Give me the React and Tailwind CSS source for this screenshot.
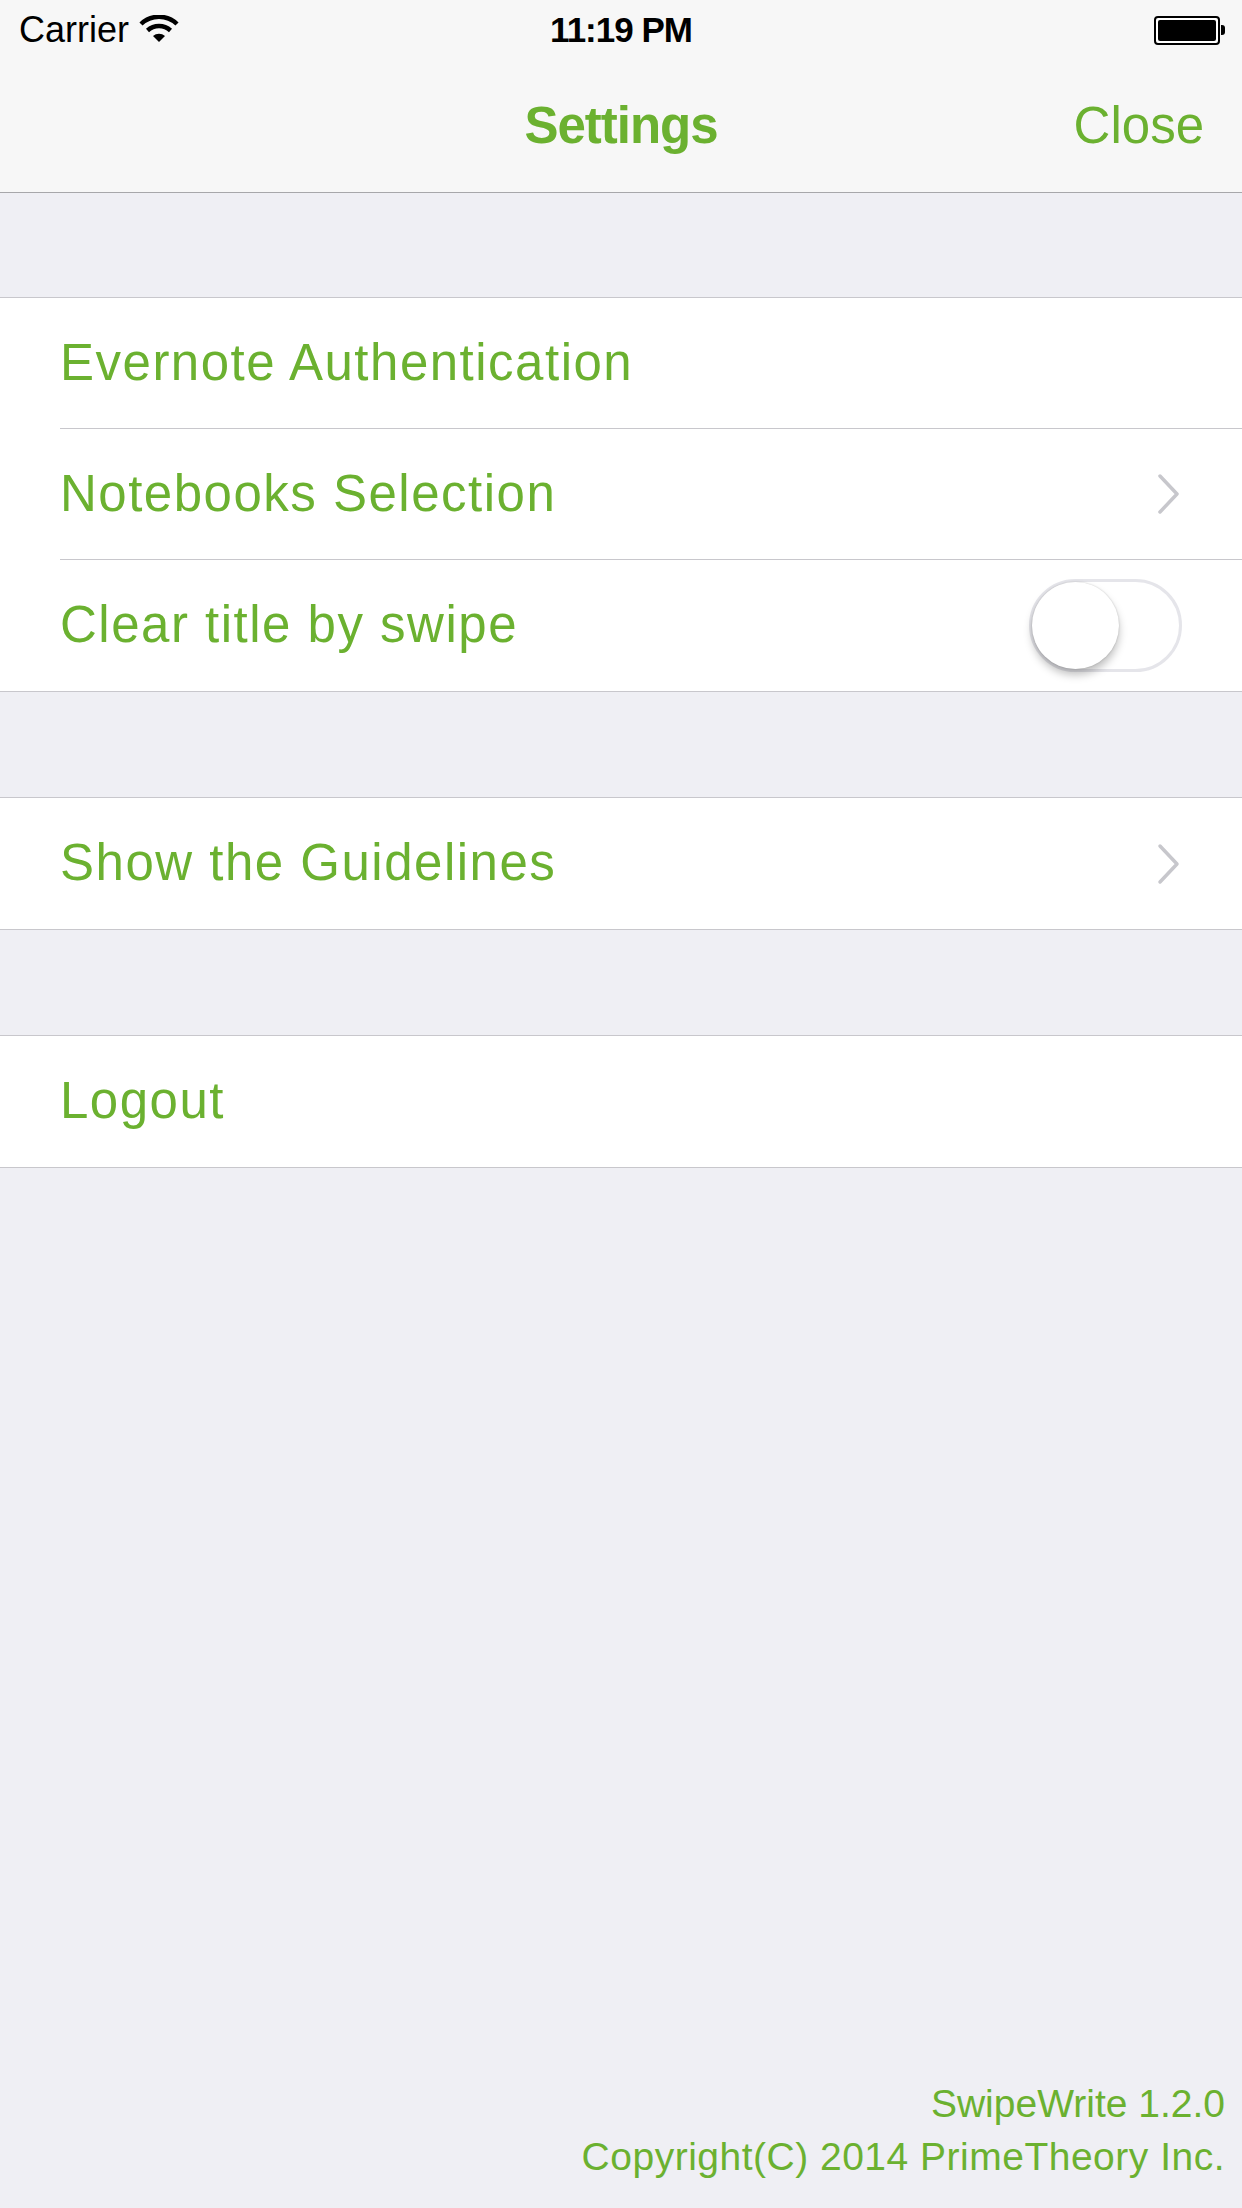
import React, { useState } from 'react';

const GREEN = 'text-[#6bb130]';

const Chevron = () => (
  <svg width="26" height="42" viewBox="0 0 26 42" className="shrink-0">
    <path d="M4 3 L21 21 L4 39" fill="none" stroke="#c7c7cc" strokeWidth="3.5" strokeLinecap="round" strokeLinejoin="round" />
  </svg>
);

const Toggle = ({ on, onChange }) => (
  <button
    onClick={() => onChange(!on)}
    className={`relative w-[153px] h-[93px] rounded-full border-[3px] shrink-0 transition-colors ${on ? 'bg-[#6bb130] border-[#6bb130]' : 'bg-white border-[#e5e5ea]'}`}
  >
    <span
      className={`absolute top-[0px] w-[87px] h-[87px] rounded-full bg-white shadow-[0_6px_9px_rgba(0,0,0,0.25),0_0_2px_rgba(0,0,0,0.2)] ${on ? 'left-[60px]' : 'left-[0px]'}`}
    />
  </button>
);

const Row = ({ label, children, last }) => (
  <div className="pl-[60px] bg-white">
    <div className={`h-[131px] flex items-center justify-between pr-[60px] ${last ? '' : 'border-b border-[#c8c7cc]'}`}>
      <span className={`text-[51px] tracking-[1.5px] ${GREEN}`}>{label}</span>
      {children}
    </div>
  </div>
);

const Group = ({ children }) => (
  <div className="bg-white border-y border-[#c8c7cc]">{children}</div>
);

const Wifi = () => (
  <svg width="40" height="28" viewBox="0 0 40 28">
    <path d="M2 9 A26 26 0 0 1 38 9" fill="none" stroke="#000" strokeWidth="4.5" />
    <path d="M8.5 15.5 A17 17 0 0 1 31.5 15.5" fill="none" stroke="#000" strokeWidth="4.5" />
    <path d="M14 21 L20 27 L26 21 A9 9 0 0 0 14 21 Z" fill="#000" />
  </svg>
);

const Battery = () => (
  <div className="flex items-center">
    <div className="w-[66px] h-[29px] rounded-[4px] border-2 border-black p-[2px] bg-white">
      <div className="w-full h-full bg-black rounded-[2px]" />
    </div>
    <div className="w-[4px] h-[10px] bg-black rounded-r-[3px] ml-[1px]" />
  </div>
);

export default function App() {
  const [clearBySwipe, setClearBySwipe] = useState(false);

  return (
    <div className="w-[1242px] h-[2208px] flex flex-col bg-[#efeff4]" style={{ fontFamily: '"Liberation Sans", Arial, sans-serif' }}>
      {/* Status + nav bar */}
      <div className="bg-[#f7f7f7] border-b border-[#a7a7aa] h-[193px] flex flex-col">
        <div className="h-[60px] relative flex items-center px-[19px]">
          <span className="text-[36px] text-black">Carrier</span>
          <span className="ml-[10px] mt-[-2px]"><Wifi /></span>
          <span className="absolute left-0 right-0 text-center text-[35px] font-bold tracking-[-1px] text-black">11:19 PM</span>
          <span className="ml-auto mr-[-2px]"><Battery /></span>
        </div>
        <div className="flex-1 relative flex items-center justify-end pr-[38px]">
          <span className={`absolute left-0 right-0 text-center text-[51px] font-bold tracking-[-1px] ${GREEN}`}>Settings</span>
          <button className={`relative text-[51px] ${GREEN}`}>Close</button>
        </div>
      </div>

      <div className="mt-[104px]">
        <Group>
          <Row label="Evernote Authentication" />
          <Row label="Notebooks Selection"><Chevron /></Row>
          <Row label="Clear title by swipe" last>
            <Toggle on={clearBySwipe} onChange={setClearBySwipe} />
          </Row>
        </Group>
      </div>

      <div className="mt-[105px]">
        <Group>
          <Row label="Show the Guidelines" last><Chevron /></Row>
        </Group>
      </div>

      <div className="mt-[105px]">
        <Group>
          <Row label="Logout" last />
        </Group>
      </div>

      {/* Footer */}
      <div className={`mt-auto pr-[17px] pb-[25px] text-right text-[39px] leading-[53px] ${GREEN}`}>
        <div>SwipeWrite 1.2.0</div>
        <div className="tracking-[0.5px]">Copyright(C) 2014 PrimeTheory Inc.</div>
      </div>
    </div>
  );
}
